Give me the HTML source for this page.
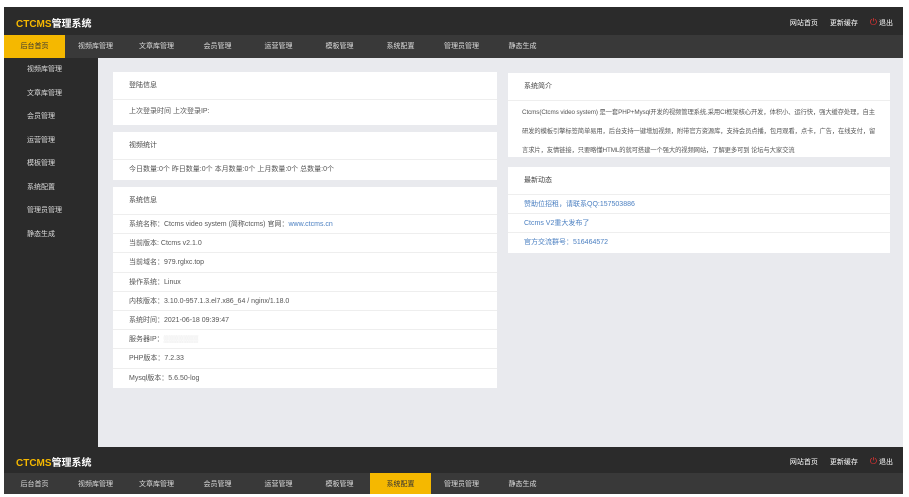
<!DOCTYPE html>
<html><head><meta charset="utf-8"><style>
*{margin:0;padding:0;box-sizing:border-box}
body{width:909px;height:494px;background:#fff;font-family:"Liberation Sans","Noto Sans CJK SC",sans-serif;font-size:7px;color:#555;position:relative;overflow:hidden}
.hd{position:absolute;left:4px;width:899px;background:#2b2b2b}
.logo{position:absolute;left:12px;font-weight:bold;font-size:10px;color:#fff}
.logo b{color:#f5b800}
.rt{position:absolute;right:10px;color:#fff;font-size:7px}
.rt span{margin-left:12px}
.rt i{color:#e33;font-style:normal;font-size:9px}
.nav{position:absolute;left:4px;width:899px;background:#393939}
.nav div{position:absolute;top:0;width:61px;text-align:center;color:#ddd;height:100%}
.nav .on{background:#f5b800;color:#333}
.side{position:absolute;left:4px;top:58px;width:94px;height:389px;background:#2b2b2b}
.side div{color:#ddd;height:23.5px;line-height:23.5px;padding-left:23px}
.main{position:absolute;left:98px;top:58px;width:805px;height:389px;background:#e9eaee}
.p{position:absolute;background:#fff;overflow:hidden}
.p .h{height:28px;line-height:28px;padding-left:16px;border-bottom:1px solid #eee;color:#444}
.p .r{height:19.2px;line-height:19.2px;padding-left:16px;border-bottom:1px solid #eee}
a{color:#4a7fc1;text-decoration:none}
</style></head><body>
<div class="hd" style="top:7px;height:28px"><div class="logo" style="top:8px"><b>CTCMS</b>管理系统</div><div class="rt" style="top:10px"><span>网站首页</span><span>更新缓存</span><span><i>⏻</i> 退出</span></div></div>
<div class="nav" style="top:35px;height:23px;line-height:23px">
<div class="on" style="left:0">后台首页</div><div style="left:61px">视频库管理</div><div style="left:122px">文章库管理</div><div style="left:183px">会员管理</div><div style="left:244px">运营管理</div><div style="left:305px">模板管理</div><div style="left:366px">系统配置</div><div style="left:427px">管理员管理</div><div style="left:488px">静态生成</div></div>
<div class="side"><div>视频库管理</div><div>文章库管理</div><div>会员管理</div><div>运营管理</div><div>模板管理</div><div>系统配置</div><div>管理员管理</div><div>静态生成</div></div>
<div class="main">
<div class="p" style="left:15px;top:14px;width:384px;height:53px"><div class="h">登陆信息</div><div class="r" style="border:0;line-height:24px">上次登录时间 上次登录IP:</div></div>
<div class="p" style="left:15px;top:74px;width:384px;height:48px"><div class="h">视频统计</div><div class="r" style="border:0">今日数量:0个 昨日数量:0个 本月数量:0个 上月数量:0个 总数量:0个</div></div>
<div class="p" style="left:15px;top:129px;width:384px;height:201px"><div class="h">系统信息</div>
<div class="r">系统名称：Ctcms video system (简称ctcms) 官网：<a>www.ctcms.cn</a></div>
<div class="r">当前版本: Ctcms v2.1.0</div><div class="r">当前域名：979.rglxc.top</div><div class="r">操作系统：Linux</div><div class="r">内核版本：3.10.0-957.1.3.el7.x86_64 / nginx/1.18.0</div><div class="r">系统时间：2021-06-18 09:39:47</div><div class="r">服务器IP：<span style="color:#ddd">▒▒▒▒▒▒▒</span></div><div class="r">PHP版本：7.2.33</div><div class="r" style="border:0">Mysql版本：5.6.50-log</div></div>
<div class="p" style="left:410px;top:15px;width:382px;height:84px"><div class="h">系统简介</div><div style="padding:2px 14px 0 14px;line-height:19px;font-size:6.3px;letter-spacing:-0.1px">Ctcms(Ctcms video system) 是一套PHP+Mysql开发的视频管理系统,采用CI框架核心开发，体积小、运行快，强大缓存处理，自主研发的模板引擎标签简单易用，后台支持一键增加视频，附带官方资源库，支持会员点播，包月观看，点卡，广告，在线支付，留言求片，友情链接，只要略懂HTML的就可搭建一个强大的视频网站，了解更多可到 论坛与大家交流</div></div>
<div class="p" style="left:410px;top:109px;width:382px;height:86px"><div class="h">最新动态</div><div class="r"><a>赞助位招租，请联系QQ:157503886</a></div><div class="r"><a>Ctcms V2重大发布了</a></div><div class="r" style="border:0"><a>官方交流群号：516464572</a></div></div>
</div>
<div class="hd" style="top:447px;height:26px"><div class="logo" style="top:7px"><b>CTCMS</b>管理系统</div><div class="rt" style="top:9px"><span>网站首页</span><span>更新缓存</span><span><i>⏻</i> 退出</span></div></div>
<div class="nav" style="top:473px;height:21px;line-height:24px">
<div style="left:0">后台首页</div><div style="left:61px">视频库管理</div><div style="left:122px">文章库管理</div><div style="left:183px">会员管理</div><div style="left:244px">运营管理</div><div style="left:305px">模板管理</div><div class="on" style="left:366px">系统配置</div><div style="left:427px">管理员管理</div><div style="left:488px">静态生成</div></div>
</body></html>
